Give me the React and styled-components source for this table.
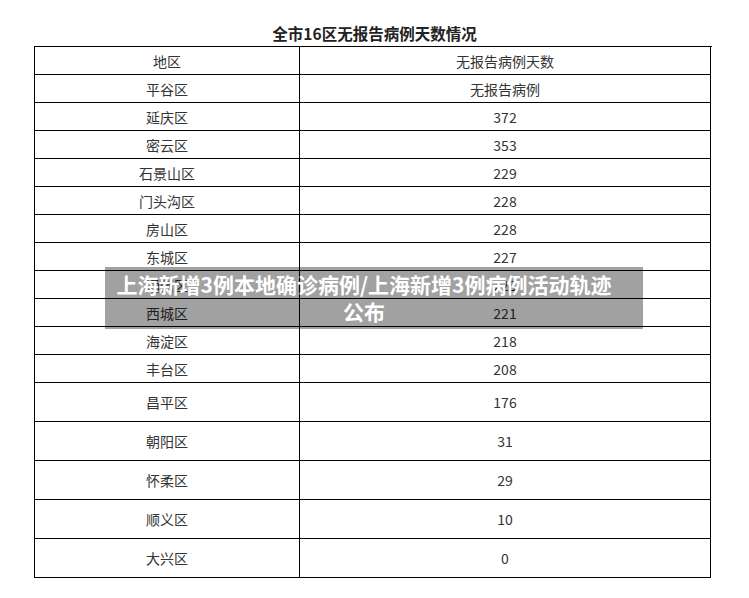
import React from "react"
import styled, { createGlobalStyle } from "styled-components"

const GlobalStyle = createGlobalStyle`
  html, body {
    margin: 0;
    padding: 0;
    background: #ffffff;
  }
  body {
    font-family: "Noto Sans CJK SC", "Noto Sans", sans-serif;
    color: #333333;
  }
`

const rows = [
  { district: "平谷区", days: "无报告病例" },
  { district: "延庆区", days: "372" },
  { district: "密云区", days: "353" },
  { district: "石景山区", days: "229" },
  { district: "门头沟区", days: "228" },
  { district: "房山区", days: "228" },
  { district: "东城区", days: "227" },
  { district: "通州区", days: "225" },
  { district: "西城区", days: "221" },
  { district: "海淀区", days: "218" },
  { district: "丰台区", days: "208" },
  { district: "昌平区", days: "176", tall: true },
  { district: "朝阳区", days: "31", tall: true },
  { district: "怀柔区", days: "29", tall: true },
  { district: "顺义区", days: "10", tall: true },
  { district: "大兴区", days: "0", tall: true },
]

const Page = styled.div`
  position: relative;
  width: 749px;
  height: 598px;
  overflow: hidden;
`

const Title = styled.h1`
  margin: 0;
  padding-top: 20px;
  height: 26px;
  line-height: 26px;
  text-align: center;
  font-size: 15.5px;
  font-weight: 700;
  color: #222222;
`

const Table = styled.div`
  display: grid;
  grid-template-columns: 265px 411px;
  width: 677px;
  margin-left: 34px;
  border-top: 1px solid #000000;
  border-left: 1px solid #000000;
`

const Cell = styled.div`
  display: flex;
  align-items: center;
  justify-content: center;
  height: ${props => props.$tall ? "38px" : "27px"};
  border-right: 1px solid #000000;
  border-bottom: 1px solid #000000;
  font-size: 14px;
  color: #333333;
`

const Banner = styled.div`
  position: absolute;
  left: 105px;
  top: 267px;
  width: 538px;
  height: 62px;
  box-sizing: border-box;
  padding: 4px 22px 4px 2px;
  background: rgba(0, 0, 0, 0.37);
  color: #ffffff;
  font-size: 21px;
  font-weight: 700;
  line-height: 27px;
  text-align: center;
`

export default function App() {
  return (
    <Page>
      <GlobalStyle />
      <Title>全市16区无报告病例天数情况</Title>
      <Table>
        <Cell>地区</Cell>
        <Cell>无报告病例天数</Cell>
        {rows.map((row) => (
          <React.Fragment key={row.district}>
            <Cell $tall={row.tall}>{row.district}</Cell>
            <Cell $tall={row.tall}>{row.days}</Cell>
          </React.Fragment>
        ))}
      </Table>
      <Banner>上海新增3例本地确诊病例/上海新增3例病例活动轨迹公布</Banner>
    </Page>
  )
}
